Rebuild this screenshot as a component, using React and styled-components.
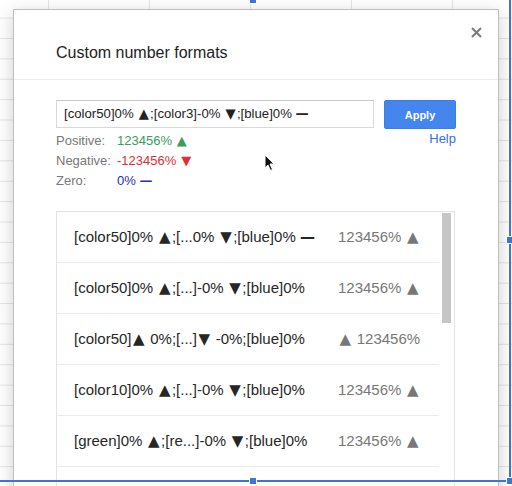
import React from "react";
import styled, { createGlobalStyle } from "styled-components";

const Global = createGlobalStyle`
  html, body { margin: 0; padding: 0; }
  body {
    width: 512px;
    height: 486px;
    overflow: hidden;
    font-family: "Liberation Sans", Arial, sans-serif;
    background-color: #fff;
    background-image:
      linear-gradient(to right, #e4e4e4 1px, transparent 1px),
      linear-gradient(to bottom, #e4e4e4 1px, transparent 1px);
    background-size: 101px 20.4px;
    background-position: 48px 17.6px;
  }
`;

const Stage = styled.div`
  position: relative;
  width: 512px;
  height: 486px;
  overflow: hidden;
`;

const Dialog = styled.div`
  position: absolute;
  left: 13px;
  top: 9px;
  width: 486px;
  height: 520px;
  box-sizing: border-box;
  background: #fff;
  border: 1px solid rgba(0, 0, 0, 0.25);
  box-shadow: 0 4px 16px rgba(0, 0, 0, 0.2);
  display: flex;
  flex-direction: column;
`;

const Header = styled.div`
  height: 70px;
  box-sizing: border-box;
  display: flex;
  align-items: flex-end;
  padding: 0 42px 16px;
  border-bottom: 1px solid #ebebeb;
`;

const Title = styled.div`
  font-size: 16px;
  line-height: 20px;
  color: #222;
`;

const Close = styled.button`
  position: absolute;
  top: 16px;
  right: 16px;
  width: 12px;
  height: 12px;
  padding: 0;
  border: 0;
  background: transparent;
  display: flex;
  align-items: center;
  justify-content: center;
`;

const Body = styled.div`
  padding: 20px 42px 0;
  display: flex;
  flex-direction: column;
`;

const InputRow = styled.div`
  display: flex;
  gap: 10px;
  height: 29px;
`;

const FormatField = styled.div`
  width: 318px;
  height: 28px;
  box-sizing: border-box;
  border: 1px solid #d9d9d9;
  border-top-color: #c8c8c8;
  padding: 0 7px;
  font-size: 13.2px;
  line-height: 26px;
  color: #222;
  white-space: nowrap;
  overflow: hidden;
`;

const ApplyButton = styled.button`
  width: 72px;
  height: 29px;
  box-sizing: border-box;
  border: 1px solid #3a7fe6;
  border-radius: 2px;
  background: #4485ee;
  color: #fff;
  font-family: "Liberation Sans", Arial, sans-serif;
  font-weight: bold;
  font-size: 11px;
  padding: 0;
`;

const PreviewArea = styled.div`
  display: flex;
  justify-content: space-between;
  align-items: flex-start;
  margin-top: 2px;
`;

const PreviewList = styled.div`
  display: flex;
  flex-direction: column;
`;

const PreviewRow = styled.div`
  display: flex;
  font-size: 13px;
  line-height: 20px;
  white-space: pre;
`;

const PreviewLabel = styled.span`
  width: 61px;
  color: #777;
`;

const PreviewValue = styled.span`
  color: ${(p) => p.$color};
`;

const Help = styled.a`
  font-size: 13px;
  line-height: 20px;
  color: #3a6fd8;
  text-decoration: none;
  margin-top: -2px;
`;

const Glyph = styled.span`
  font-family: "DejaVu Sans", sans-serif;
  font-weight: ${(p) => (p.$dash ? "bold" : "normal")};
  padding: 0 ${(p) => (p.$dash ? "0" : "0.1em")};
`;

const FormatList = styled.div`
  position: relative;
  margin-top: 20px;
  width: 399px;
  height: 300px;
  box-sizing: border-box;
  border: 1px solid #e3e3e3;
  border-bottom: 0;
  display: flex;
  overflow: hidden;
`;

const Rows = styled.div`
  width: 382px;
  display: flex;
  flex-direction: column;
`;

const Row = styled.div`
  height: 51px;
  flex: none;
  box-sizing: border-box;
  border-bottom: 1px solid #ebebeb;
  display: flex;
  align-items: center;
  padding-left: 17px;
  font-size: 15px;
  white-space: pre;
`;

const RowFormat = styled.span`
  width: 264px;
  flex: none;
  color: #262626;
`;

const RowSample = styled.span`
  color: #777;
`;

const ScrollTrack = styled.div`
  flex: 1;
  display: flex;
  justify-content: center;
  padding-top: 1px;
`;

const ScrollThumb = styled.div`
  width: 9px;
  height: 110px;
  background: #c6c6c6;
`;

const SelLine = styled.div`
  position: absolute;
  background: #3d74d6;
  ${(p) =>
    p.$vertical
      ? `left: 509px; top: 0; width: 2px; height: 482px;`
      : `left: 0; top: 480px; width: 511px; height: 2px;`}
`;

const Handle = styled.div`
  position: absolute;
  width: 6px;
  height: 6px;
  background: #3d74d6;
  border: 1px solid #fff;
  left: ${(p) => p.$x - 4}px;
  top: ${(p) => p.$y - 4}px;
`;

const Cursor = styled.svg`
  position: absolute;
  left: 264px;
  top: 154px;
`;

function Fmt({ text }) {
  const parts = text.split(/([▲▼—])/);
  return (
    <span>
      {parts.map((p, i) =>
        p === "▲" || p === "▼" ? (
          <Glyph key={i}>{p}</Glyph>
        ) : p === "—" ? (
          <Glyph key={i} $dash>
            {p}
          </Glyph>
        ) : (
          <React.Fragment key={i}>{p}</React.Fragment>
        )
      )}
    </span>
  );
}

const formats = [
  ["[color50]0% ▲;[...0% ▼;[blue]0% —", "123456% ▲"],
  ["[color50]0% ▲;[...]-0% ▼;[blue]0%", "123456% ▲"],
  ["[color50]▲ 0%;[...]▼ -0%;[blue]0%", "▲ 123456%"],
  ["[color10]0% ▲;[...]-0% ▼;[blue]0%", "123456% ▲"],
  ["[green]0% ▲;[re...]-0% ▼;[blue]0%", "123456% ▲"],
  ["", ""],
];

export default function App() {
  return (
    <Stage>
      <Global />
      <Dialog>
        <Header>
          <Title>Custom number formats</Title>
        </Header>
        <Close aria-label="Close">
          <svg width="11" height="11" viewBox="0 0 11 11">
            <path d="M1 1L10 10M10 1L1 10" stroke="#7a7a7a" strokeWidth="2" />
          </svg>
        </Close>
        <Body>
          <InputRow>
            <FormatField role="textbox">
              <Fmt text="[color50]0% ▲;[color3]-0% ▼;[blue]0% —" />
            </FormatField>
            <ApplyButton>Apply</ApplyButton>
          </InputRow>
          <PreviewArea>
            <PreviewList>
              <PreviewRow>
                <PreviewLabel>Positive:</PreviewLabel>
                <PreviewValue $color="#3c9a62">
                  <Fmt text="123456% ▲" />
                </PreviewValue>
              </PreviewRow>
              <PreviewRow>
                <PreviewLabel>Negative:</PreviewLabel>
                <PreviewValue $color="#dd2f35">
                  <Fmt text="-123456% ▼" />
                </PreviewValue>
              </PreviewRow>
              <PreviewRow>
                <PreviewLabel>Zero:</PreviewLabel>
                <PreviewValue $color="#2230b0">
                  <Fmt text="0% —" />
                </PreviewValue>
              </PreviewRow>
            </PreviewList>
            <Help href="#">Help</Help>
          </PreviewArea>
          <FormatList>
            <Rows>
              {formats.map(([f, s], i) => (
                <Row key={i}>
                  <RowFormat>
                    <Fmt text={f} />
                  </RowFormat>
                  <RowSample>
                    <Fmt text={s} />
                  </RowSample>
                </Row>
              ))}
            </Rows>
            <ScrollTrack>
              <ScrollThumb />
            </ScrollTrack>
          </FormatList>
        </Body>
      </Dialog>
      <Cursor width="12" height="18" viewBox="0 0 12 18">
        <path
          d="M1 1 L1 14 L4 11 L6.5 16.5 L8.5 15.5 L6 10 L10 10 Z"
          fill="#111"
          stroke="#fff"
          strokeWidth="1"
          strokeLinejoin="round"
        />
      </Cursor>
      <SelLine $vertical />
      <SelLine />
      <Handle $x={253} $y={0} />
      <Handle $x={510} $y={240} />
      <Handle $x={253} $y={481} />
      <Handle $x={510} $y={481} />
    </Stage>
  );
}
